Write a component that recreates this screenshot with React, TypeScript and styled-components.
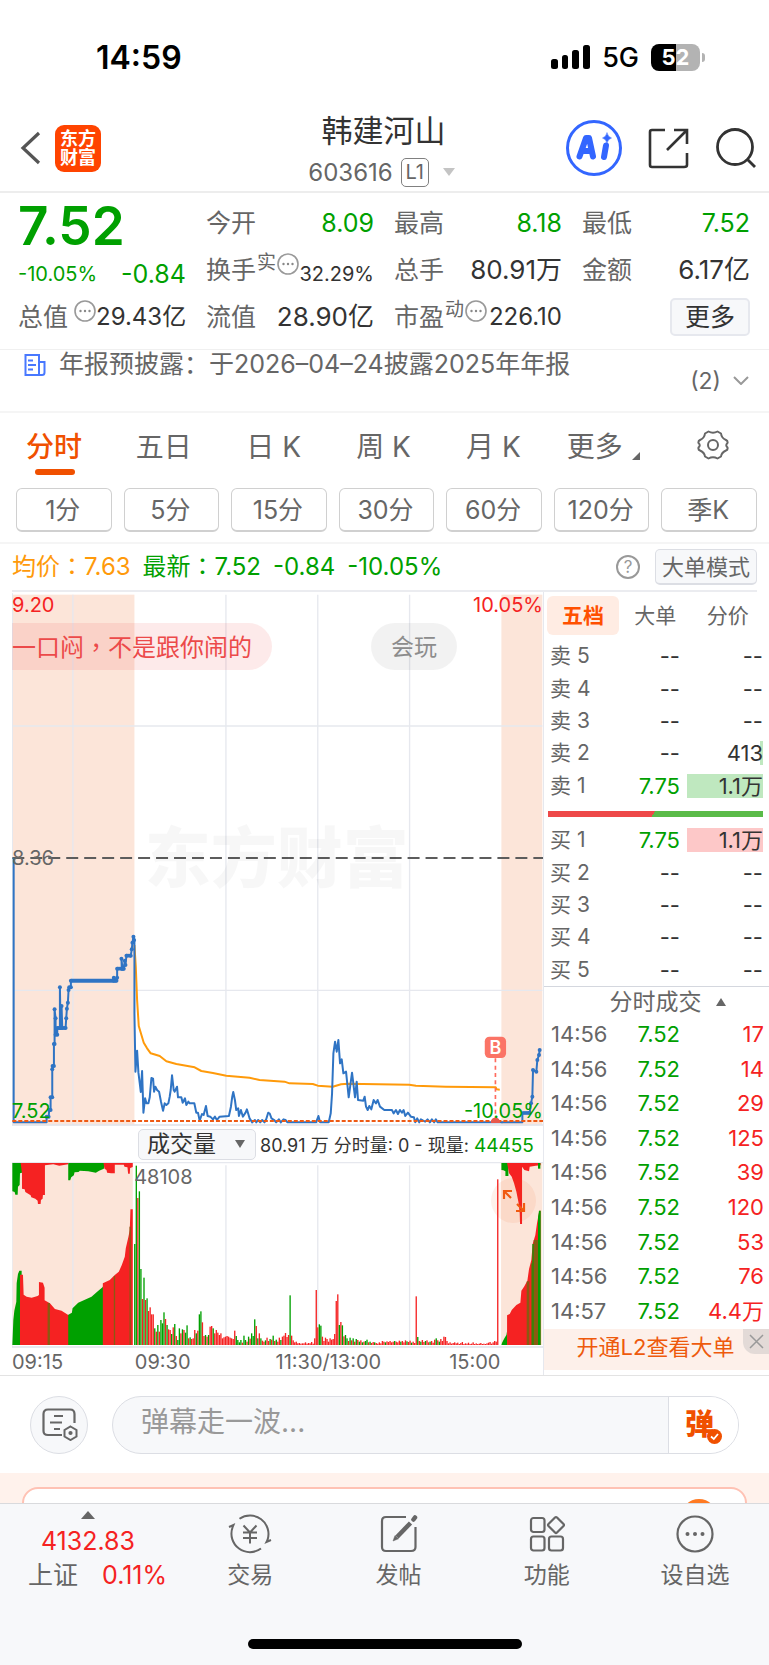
import React from "react";
import styled, { createGlobalStyle } from "styled-components";

const c = {
  green: "#00a000",
  red: "#f52222",
  orange: "#f05000",
  text: "#333333",
  sub: "#666666",
  line: "#e6e8ee",
  soft: "#f7f8fa",
  peach: "#fce5d9",
  blue: "#2f74c4",
  avg: "#ff9a0a",
  brown: "#8a5a12",
};

const Global = createGlobalStyle`
  *, *::before, *::after { box-sizing: border-box; }
  html, body { margin: 0; background: #fff; }
  body {
    font-family: Inter, "Noto Sans CJK SC", sans-serif;
    color: ${c.text};
    -webkit-font-smoothing: antialiased;
  }
  button, input, select { font: inherit; color: inherit; margin: 0; padding: 0; border: 0; background: none; }
  button { cursor: pointer; }
  table { border-collapse: collapse; }
  svg { display: block; }
`;

const Page = styled.div`
  min-height: 100vh;
  display: flex;
  flex-direction: column;
  overflow: hidden;
`;

/* ---------- status bar ---------- */

const StatusBar = styled.div`
  height: 104px;
  padding: 10px 69px 0 96px;
  display: flex;
  align-items: center;
  justify-content: space-between;
  color: #000;
`;
const Clock = styled.span`
  font-size: 32px;
  font-weight: 600;
`;
const StatusRight = styled.div`
  display: flex;
  align-items: center;
  gap: 12px;
`;
const Network = styled.span`
  font-size: 27px;
  font-weight: 500;
`;
const Battery = styled.span`
  position: relative;
  width: 49px;
  height: 27px;
  border-radius: 8px;
  background: linear-gradient(90deg, #000 52%, #b3b3b3 52%);
  color: #fff;
  font-size: 22px;
  font-weight: 700;
  line-height: 27px;
  text-align: center;
  &::after {
    content: "";
    position: absolute;
    right: -5px;
    top: 9px;
    width: 3px;
    height: 9px;
    border-radius: 0 3px 3px 0;
    background: #b3b3b3;
  }
`;

/* ---------- header ---------- */

const Header = styled.header`
  height: 89px;
  padding: 0 12px;
  border-bottom: 2px solid #ededed;
  display: grid;
  grid-template-columns: 1fr auto 1fr;
  align-items: center;
`;
const HeaderSide = styled.div<{ $end?: boolean; $gap: number }>`
  display: flex;
  align-items: center;
  gap: ${(p) => p.$gap}px;
  padding-left: ${(p) => (p.$end ? 0 : 6)}px;
  justify-content: ${(p) => (p.$end ? "flex-end" : "flex-start")};
`;
const IconButton = styled.button`
  display: flex;
  align-items: center;
  justify-content: center;
  color: ${c.text};
`;
const Logo = styled.a`
  width: 46px;
  height: 47px;
  padding-top: 4px;
  border-radius: 9px;
  background: #ff4400;
  color: #fff;
  font-size: 18px;
  font-weight: 700;
  line-height: 19px;
  text-align: center;
  text-decoration: none;
`;
const TitleBlock = styled.div`
  display: flex;
  flex-direction: column;
  align-items: center;
  padding: 6px 2px 0 0;
`;
const Title = styled.h1`
  margin: 0;
  font-size: 31px;
  font-weight: 400;
  line-height: 42px;
`;
const CodeRow = styled.div`
  display: flex;
  align-items: center;
  gap: 8px;
  height: 40px;
  padding-right: 4px;
  color: ${c.sub};
  font-size: 24px;
`;
const Level = styled.span`
  width: 28px;
  height: 29px;
  border: 1px solid #808080;
  border-radius: 5px;
  font-size: 20px;
  line-height: 27px;
  text-align: center;
`;
const Caret = styled.span<{ $up?: boolean; $color?: string; $size?: number }>`
  width: 0;
  height: 0;
  border: ${(p) => p.$size ?? 6}px solid transparent;
  ${(p) =>
    p.$up
      ? `border-top: 0; border-bottom: 8px solid ${p.$color ?? c.sub};`
      : `border-bottom: 0; border-top: 8px solid ${p.$color ?? c.sub};`}
`;
const CodeCaret = styled(Caret)`
  margin-left: 6px;
`;

/* ---------- quote ---------- */

const Quote = styled.section`
  height: 156px;
  padding: 6px 19px 0 18px;
  display: grid;
  grid-template-columns: repeat(4, minmax(0, 1fr));
  grid-auto-rows: 47px;
  column-gap: 20px;
`;
const Cell = styled.div`
  display: flex;
  align-items: center;
  justify-content: space-between;
  white-space: nowrap;
`;
const BigPrice = styled.strong`
  padding-top: 6px;
  font-size: 53px;
  font-weight: 600;
  line-height: 54px;
  color: ${c.green};
`;
const Label = styled.span`
  display: flex;
  gap: 1px;
  color: ${c.sub};
  font-size: 25px;
  line-height: 34px;
`;
const Sup = styled.small`
  font-size: 19px;
  line-height: 20px;
`;
const InfoMark = styled.span<{ $apart?: boolean }>`
  padding-left: ${(p) => (p.$apart ? 5 : 0)}px;
`;
const Value = styled.span<{ $tone?: string; $size?: number; $low?: boolean }>`
  font-size: ${(p) => p.$size ?? 25}px;
  line-height: 34px;
  color: ${(p) => p.$tone ?? c.text};
  padding-top: ${(p) => (p.$low ? 8 : 0)}px;
`;
const MoreButton = styled.button`
  width: 80px;
  height: 38px;
  margin-left: auto;
  border: 2px solid ${c.line};
  border-radius: 5px;
  background: ${c.soft};
  font-size: 25px;
  line-height: 32px;
`;

/* ---------- news ---------- */

const News = styled.section`
  height: 64px;
  padding: 0 20px 0 24px;
  border-top: 1px solid #f0f0f0;
  border-bottom: 2px solid #f5f5f5;
  display: flex;
  gap: 13px;
  color: ${c.sub};
  svg { flex: none; }
`;
const NewsIcon = styled.span`
  padding-top: 4px;
`;
const NewsLink = styled.a`
  flex: 1;
  color: inherit;
  text-decoration: none;
  font-size: 25px;
  line-height: 29px;
`;
const NewsCount = styled.button`
  display: flex;
  align-items: center;
  gap: 12px;
  font-size: 23px;
`;

/* ---------- periods ---------- */

const Tabs = styled.nav`
  height: 66px;
  display: grid;
  grid-template-columns: repeat(7, 1fr);
`;
const Tab = styled.button<{ $active?: boolean }>`
  position: relative;
  display: flex;
  align-items: center;
  justify-content: center;
  padding: 0 2px 3px 0;
  font-size: 28px;
  white-space: nowrap;
  color: ${(p) => (p.$active ? c.orange : c.sub)};
  font-weight: ${(p) => (p.$active ? 500 : 400)};
  &::after {
    content: "";
    display: ${(p) => (p.$active ? "block" : "none")};
    position: absolute;
    left: 50%;
    bottom: 4px;
    width: 40px;
    height: 6px;
    margin-left: -20px;
    border-radius: 3px;
    background: ${c.orange};
  }
`;
const Corner = styled.span`
  align-self: flex-end;
  margin: 0 0 16px 9px;
  border-left: 8px solid transparent;
  border-bottom: 8px solid ${c.sub};
`;
const Minutes = styled.div`
  padding: 9px 12px 10px 16px;
  border-bottom: 2px solid #f5f5f5;
  display: grid;
  grid-template-columns: repeat(7, 1fr);
  gap: 12px;
`;
const MinuteButton = styled.button`
  height: 44px;
  padding-right: 2px;
  border: 1px solid #d0d0d0;
  border-bottom-width: 2px;
  border-radius: 6px;
  color: ${c.sub};
  font-size: 25px;
  line-height: 42px;
  white-space: nowrap;
`;

/* ---------- chart heading ---------- */

const Summary = styled.div`
  height: 48px;
  margin: 0 12px;
  border-bottom: 2px solid #ebecf0;
  display: flex;
  align-items: center;
  gap: 12px;
  font-family: Inter, "Noto Sans CJK TC", sans-serif;
  font-size: 24px;
  line-height: 36px;
  color: ${c.green};
  white-space: nowrap;
`;
const Average = styled.span`
  color: ${c.avg};
`;
const Help = styled.button`
  width: 24px;
  height: 24px;
  margin-left: auto;
  border: 2px solid #999;
  border-radius: 50%;
  color: #999;
  font-size: 17px;
  line-height: 20px;
`;
const ModeButton = styled.button`
  width: 102px;
  height: 36px;
  margin-left: 3px;
  border: 1px solid #dcdee4;
  border-bottom-width: 2px;
  border-radius: 5px;
  background: ${c.soft};
  color: ${c.sub};
  font-size: 22px;
  line-height: 32px;
`;

/* ---------- chart column ---------- */

const Board = styled.main`
  display: flex;
  border-bottom: 1px solid #e3e3e3;
`;
const ChartColumn = styled.div`
  flex: 1;
  min-width: 0;
  padding-left: 12px;
  border-right: 1px solid ${c.line};
`;
const PriceArea = styled.div`
  position: relative;
  height: 534px;
  overflow: hidden;
  & > svg { width: 100%; height: 100%; }
`;
const VolumeArea = styled(PriceArea)`
  height: 186px;
`;
const ChartText = styled.span<{ $top: number; $right?: boolean; $tone: string }>`
  position: absolute;
  top: ${(p) => p.$top}px;
  ${(p) => (p.$right ? "right: 0;" : "left: 0;")}
  font-size: 20px;
  line-height: 24px;
  color: ${(p) => p.$tone};
`;
const PeakVolume = styled(ChartText)`
  left: 23%;
`;
const Watermark = styled.span`
  position: absolute;
  top: 222px;
  left: 25%;
  font-size: 66px;
  font-weight: 900;
  line-height: 88px;
  color: rgba(0, 0, 0, 0.03);
`;
const Bullet = styled.span<{ $mine?: boolean }>`
  position: absolute;
  top: 31px;
  left: ${(p) => (p.$mine ? "0" : "67.6%")};
  height: 47px;
  padding: ${(p) => (p.$mine ? "0 20px 0 0" : "0 20px")};
  border-radius: ${(p) => (p.$mine ? "0 24px 24px 0" : "24px")};
  background: ${(p) => (p.$mine ? "rgba(236, 60, 60, 0.11)" : "rgba(0, 0, 0, 0.05)")};
  color: ${(p) => (p.$mine ? "#ec4a4a" : "#8c8c8c")};
  font-family: "Noto Sans CJK TC", sans-serif;
  font-size: ${(p) => (p.$mine ? 24 : 23)}px;
  line-height: 45px;
  white-space: nowrap;
`;
const VolumeBar = styled.div`
  height: 36px;
  padding-left: 126px;
  display: flex;
  align-items: center;
  gap: 4px;
  font-size: 18px;
  white-space: pre;
  b { font-weight: 400; font-size: 19px; color: ${c.green}; }
`;
const SelectBox = styled.label`
  position: relative;
  display: flex;
  align-items: center;
  width: 118px;
  height: 31px;
  border: 1px solid #dcdee4;
  border-radius: 5px;
  background: ${c.soft};
  select {
    width: 100%;
    padding-left: 8px;
    appearance: none;
    outline: none;
    font-size: 23px;
    line-height: 28px;
  }
  span { position: absolute; right: 10px; pointer-events: none; }
`;
const Expand = styled.button`
  position: absolute;
  top: 16px;
  right: 7px;
  width: 45px;
  height: 45px;
  border-radius: 50%;
  background: rgba(240, 80, 0, 0.08);
  display: flex;
  align-items: center;
  justify-content: center;
`;
const Axis = styled.div`
  height: 27px;
  display: grid;
  grid-template-columns: 123fr 141fr 174fr 94fr;
  color: ${c.sub};
  font-size: 20px;
  line-height: 29px;
  white-space: nowrap;
`;

/* ---------- depth column ---------- */

const DepthColumn = styled.aside`
  width: 225px;
  display: flex;
  flex-direction: column;
  font-size: 22px;
`;
const DepthTabs = styled.div`
  height: 48px;
  padding: 4px 5px 5px 3px;
  display: grid;
  grid-template-columns: 72px 1fr 1fr;
`;
const DepthTab = styled.button<{ $active?: boolean }>`
  border-radius: 6px;
  font-size: 21px;
  line-height: 38px;
  background: ${(p) => (p.$active ? "#ffece3" : "none")};
  color: ${(p) => (p.$active ? "#ff5000" : c.sub)};
  font-weight: ${(p) => (p.$active ? 700 : 400)};
`;
const DepthTable = styled.table`
  width: 100%;
  height: 162px;
  table-layout: fixed;
  th, td { padding: 0; text-align: right; font-weight: 400; line-height: 24px; }
  th { width: 54px; padding-left: 6px; text-align: left; color: ${c.sub}; font-size: 21px; }
  td:last-child { width: 89px; padding: 0 6px 0 7px; }
`;
const Amount = styled.span<{ $fill?: string }>`
  display: block;
  background: ${(p) => p.$fill ?? "none"};
`;
const Ratio = styled.div`
  height: 6px;
  margin: 9px 6px 7px 4px;
  background: linear-gradient(120deg, #ee4848 49%, #5abb48 49%);
`;
const TradesHead = styled.button`
  height: 31px;
  padding-left: 22px;
  border-top: 1px solid #d4d7de;
  display: flex;
  align-items: center;
  justify-content: center;
  gap: 14px;
  color: ${c.sub};
  font-size: 23px;
  line-height: 29px;
`;
const Trades = styled.table`
  width: 100%;
  height: 311px;
  margin-bottom: 1px;
  table-layout: fixed;
  td { height: 34px; padding: 0; text-align: right; line-height: 24px; }
  td:first-child { width: 72px; padding-left: 7px; text-align: left; color: ${c.sub}; }
  td:nth-child(2) { width: 64px; color: ${c.green}; }
  td:last-child { padding-right: 5px; color: ${c.red}; }
`;
const Promo = styled.div`
  position: relative;
  height: 41px;
  background: #fdf0ea;
  a {
    display: block;
    padding-right: 2px;
    color: #ee5a0c;
    font-size: 22px;
    line-height: 37px;
    text-align: center;
    text-decoration: none;
  }
`;
const PromoClose = styled.button`
  position: absolute;
  top: 0;
  right: 0;
  width: 26px;
  height: 25px;
  border-radius: 0 0 0 12px;
  background: #e3dad7;
  display: flex;
  align-items: center;
  justify-content: center;
`;

/* ---------- comment box ---------- */

const Compose = styled.form`
  height: 97px;
  padding: 0 30px;
  display: flex;
  align-items: center;
  gap: 24px;
`;
const RoundButton = styled.button`
  width: 58px;
  height: 58px;
  border: 1px solid #dcdee4;
  border-radius: 50%;
  background: ${c.soft};
  display: flex;
  align-items: center;
  justify-content: center;
  padding-left: 2px;
`;
const ComposePill = styled.div`
  flex: 1;
  height: 58px;
  border: 1px solid #dcdee4;
  border-radius: 29px;
  overflow: hidden;
  display: flex;
  background: ${c.soft};
  input {
    flex: 1;
    min-width: 0;
    padding: 0 0 6px 28px;
    outline: none;
    font-size: 28px;
  }
  input::placeholder { color: #999; opacity: 1; }
`;
const SendButton = styled.button`
  position: relative;
  width: 70px;
  border-left: 1px solid #dcdee4;
  background: #fff;
  padding-right: 8px;
  color: ${c.orange};
  font-size: 29px;
  font-weight: 900;
  line-height: 54px;
  svg { position: absolute; left: 38px; top: 32px; }
`;
const CardPeek = styled.div`
  height: 30px;
  padding: 14px 22px 0;
  background: #fff2ec;
  overflow: hidden;
`;
const Card = styled.div`
  height: 60px;
  padding: 10px 28px;
  border: 2px solid #ffc2b4;
  border-radius: 16px;
  background: #fff;
  display: flex;
  justify-content: flex-end;
  &::after {
    content: "";
    width: 36px;
    height: 36px;
    border-radius: 50%;
    background: #ff7a22;
  }
`;

/* ---------- bottom bar ---------- */

const Footer = styled.footer`
  flex: 1;
  min-height: 162px;
  border-top: 1px solid #d9dadd;
  background: ${c.soft};
  display: flex;
  flex-direction: column;
  justify-content: space-between;
  align-items: center;
`;
const FooterNav = styled.nav`
  width: 100%;
  display: grid;
  grid-template-columns: 176fr 148fr 148fr 148fr 148fr;
  color: ${c.sub};
`;
const FooterItem = styled.a`
  padding-top: 10px;
  display: flex;
  flex-direction: column;
  align-items: center;
  gap: 5px;
  color: inherit;
  text-decoration: none;
  font-size: 23px;
  line-height: 32px;
`;
const IndexItem = styled.a`
  padding: 7px 0 0 28px;
  color: ${c.red};
  text-decoration: none;
  font-size: 25px;
`;
const IndexTop = styled.div`
  width: 120px;
  display: flex;
  flex-direction: column;
  align-items: center;
  line-height: 44px;
`;
const IndexRow = styled.div`
  display: flex;
  align-items: center;
  gap: 24px;
  line-height: 24px;
  white-space: nowrap;
  span { color: ${c.sub}; }
`;
const HomeBar = styled.div`
  width: 274px;
  height: 10px;
  margin-bottom: 16px;
  border-radius: 5px;
  background: #000;
`;

/* ---------- icons ---------- */

const Dots = ({ apart }: { apart?: boolean }) => (
  <InfoMark $apart={apart}>
    <svg width="22" height="22" viewBox="0 0 22 22">
      <circle cx="11" cy="11" r="10" fill="none" stroke="#999" strokeWidth="1.6" />
      <circle cx="6.5" cy="11" r="1.2" fill="#888" />
      <circle cx="11" cy="11" r="1.2" fill="#888" />
      <circle cx="15.5" cy="11" r="1.2" fill="#888" />
    </svg>
  </InfoMark>
);

const stroke = { fill: "none", stroke: "#666", strokeWidth: 2.2 } as const;

/* ---------- chart data (three units to a pixel) ---------- */

const auctionOpen =
  "41,-96 41,697 140,697 140,680 146,680 148,660 152,660 152,622 157,622 157,538 158,528 162,528 162,462 164,462 164,358 167,385 167,434 172,434 172,414 180,414 180,292 182,414 185,348 187,414 197,414 199,385 201,356 204,338 206,300 208,292 213,292 213,272 342,272 342,263 350,272 352,263 352,236 366,236 365,206 368,236 372,236 375,212 377,225 380,197 393,197 396,178 398,158 401,140 403,150";
const morning =
  "404,150 404,370 407,545 412,482 416,548 420,580 423,606 427,543 431,668 436,625 440,640 446,640 450,622 455,564 460,566 463,605 467,590 472,600 478,605 484,636 490,662 495,640 500,645 506,640 510,620 513,600 517,556 522,600 525,605 532,590 535,622 545,622 549,638 556,625 560,645 566,635 570,640 584,640 590,668 595,668 600,692 607,672 612,675 619,648 624,678 632,680 640,688 646,680 652,690 660,680 688,678 694,650 698,620 701,606 706,630 710,660 716,655 718,678 724,660 730,680 738,668 742,658 750,685 758,697 766,690 770,697 776,690 782,697 788,690 795,697 800,688 806,668 810,669";
const afternoon =
  "0,669 6,685 14,690 20,697 28,688 34,697 42,688 48,690 54,697 140,697 147,678 152,697 178,697 184,670 188,610 192,490 197,455 202,485 207,450 212,520 217,508 222,550 230,545 238,622 248,548 257,622 262,575 266,630 282,632 286,620 290,650 295,660 300,648 306,658 313,630 320,640 325,630 332,650 345,660 368,660 373,670 380,660 386,672 392,660 398,668 403,660 408,678 416,668 425,680 434,682 438,697 444,685 450,697 455,688 462,692 468,695 475,688 482,697 488,688 495,697 500,688 505,697 700,697";
const auctionClose =
  "697,697 760,697 760,668 782,668 786,640 790,620 792,540 802,545 805,510 810,495 812,480";
const averageLine =
  "404,165 408,230 412,330 417,408 425,435 432,458 442,475 453,490 480,498 500,514 530,522 585,532 605,543 640,549 680,557 750,563 780,570 855,575 870,580 940,582 955,587 1000,590 1025,583 1045,581 1230,584 1250,587 1340,590 1490,592 1493,598 1502,599";

const dotsOf = (points: string) =>
  points
    .split(" ")
    .slice(3)
    .map((p) => p.split(",").map(Number));

/* volume per minute, positive red and negative green */
const volumes = [
  -303, -538, 441, -461, -228, 138, -202, 135, -140, 102, 113, 92, 92, -50, 40, -60, 40, -75, -65, -98, 78, -60, 47,
  45, -33, 53, -63, 27, -15, -50, 35, -47, 45, -37, -59, 20, -23, 18, 20, 45, -35, 43, -92, -101, 68, 27, -30, 25, -30,
  55, 57, -50, 35, 45, 37, 30, 35, 20, 23, 25, 27, 25, 22, 20, 18, 43, -27, -15, -8, -15, 7, -28, -15, 10, -25, 19,
  -35, -27, -77, 57, -20, 35, -20, 13, 10, -14, 22, 12, -18, 16, -28, 12, -16, 10, 22, -15, 25, 28, 36, 24, 30, -149, 28,
  14, 8, 10, 5, 6, 4, 5, 5, 8, 4, 6, 5, 9, 4, 20, 165, 53, -62, -58, 25, 12, 22, 18, 10, 20, 16, 18, 33, 132, 152, -60,
  69, -59, 26, -30, -20, 12, -22, 14, -20, 10, -18, 15, -10, 14, -8, 10, -12, -16, 8, -10, 6, 9, -8, 6, 4, 8, 5, 12, 10,
  -8, 11, 9, 12, 8, 10, -12, 10, 8, 13, -10, 12, 8, 14, -11, 9, 13, -7, 10, 6, 146, -24, 12, -10, 15, 9, -12, 14, 8, -10,
  12, 7, 16, -20, 14, -10, 18, 12, 25, 24, 12, 5, 8, 4, 6, 8, 5, 7, 3, 6, 9, 3, 5, 4, 7, 3, 4, 8, 3, 5, 3, 4, 6, 3, 4, 3,
  5, 7, 9, 4, 8, 12, 10, 497,
];
const step = 1091 / (volumes.length - 1);

const gridX = [219, 679, 955, 1231];

const PriceChart = () => (
  <svg viewBox="36 -894 1596 1602" preserveAspectRatio="none" role="img" aria-label="分时走势">
    <rect x="37" y="-886" width="367" height="1590" fill={c.peach} />
    <rect x="1507" y="-886" width="123" height="1590" fill={c.peach} />
    {gridX.map((x) => (
      <line key={x} x1={x} x2={x} y1="-886" y2="704" stroke={c.line} strokeWidth="4" />
    ))}
    <line x1="37" x2="1630" y1="-492" y2="-492" stroke={c.line} strokeWidth="5" />
    <line x1="37" x2="1630" y1="301" y2="301" stroke={c.line} strokeWidth="4" />
    <line x1="37" x2="37" y1="-890" y2="704" stroke={c.line} strokeWidth="4" />
    <line x1="36" x2="1632" y1="705" y2="705" stroke="#dfe2e8" strokeWidth="5" />
    <line x1="37" x2="1632" y1="-96" y2="-96" stroke="#5c5c5c" strokeWidth="6" strokeDasharray="36 18" />
    <polyline points={averageLine} fill="none" stroke={c.avg} strokeWidth="6" strokeLinejoin="round" />
    <g fill="none" stroke={c.blue} strokeWidth="6" strokeLinejoin="round">
      <polyline points={auctionOpen} />
      <polyline points={morning} />
      <line x1="213" x2="350" y1="272" y2="272" strokeWidth="12" />
      <line x1="172" x2="198" y1="414" y2="414" strokeWidth="11" />
      <line x1="352" x2="374" y1="236" y2="236" strokeWidth="11" />
      <line x1="379" x2="394" y1="197" y2="197" strokeWidth="11" />
      <g transform="translate(810 0)">
        <polyline points={afternoon} />
        <polyline points={auctionClose} />
        <line x1="760" x2="782" y1="669" y2="669" strokeWidth="11" />
      </g>
    </g>
    <g fill={c.blue}>
      {dotsOf(auctionOpen).map(([x, y], i) => (
        <circle key={i} cx={x} cy={y} r="6" />
      ))}
      {dotsOf(auctionClose).map(([x, y], i) => (
        <circle key={i} cx={x + 810} cy={y} r="6" />
      ))}
    </g>
    <line x1="37" x2="1632" y1="693" y2="693" stroke="#ee5a14" strokeWidth="6" strokeDasharray="12 6" />
    <line x1="1489" x2="1489" y1="505" y2="690" stroke="#ff6b5e" strokeWidth="5" strokeDasharray="12 10" />
    <path d="M1475 699 q0 -16 14 -16 q14 0 14 16z" fill="#e8584c" />
    <rect x="1457" y="440" width="64" height="64" rx="14" fill="#fb7466" />
    <text x="1489" y="491" textAnchor="middle" fontSize="54" fontWeight="600" fill="#fff">
      B
    </text>
  </svg>
);

const VolumeChart = () => (
  <svg viewBox="36 126 1596 558" preserveAspectRatio="none" role="img" aria-label="成交量">
    <line x1="36" x2="1632" y1="128" y2="128" stroke={c.line} strokeWidth="4" />
    <rect x="37" y="129" width="362" height="546" fill={c.peach} />
    <rect x="1506" y="129" width="124" height="546" fill={c.peach} />
    {gridX.map((x) => (
      <line key={x} x1={x} x2={x} y1="136" y2="675" stroke={c.line} strokeWidth="4" />
    ))}
    <line x1="36" x2="36" y1="129" y2="682" stroke={c.line} strokeWidth="4" />
    <g fill={c.green}>
      <path d="M37 129 V214 L44 216 L46 224 H53 L54 200 L59 195 L60 160 L66 158 V129z" />
      <path d="M205 129 V181 H211 L214 172 L222 166 L224 157 L236 156 L240 152 L265 154 L288 158 L298 152 L312 146 L316 129z" />
      <path d="M37 675 L40 600 L43 572 L49 545 L50 490 L54 462 L58 452 H65 V675z" />
      <path d="M204 675 V585 L216 578 L218 565 L235 548 L260 537 L275 530 L292 515 L308 502 L312 495 V675z" />
    </g>
    <g fill={c.red}>
      <path d="M62 129 L66 160 V206 L74 208 L76 216 L92 226 L94 232 L106 236 L113 242 L114 252 H122 L123 240 L128 236 L129 225 H135 V136 L160 133 L178 137 L205 133 V129z" />
      <path d="M311 129 L314 146 L320 150 L322 158 L334 160 H345 V134 L372 134 L374 140 L383 142 L385 161 H390 L391 144 L399 141 V129z" />
      <path d="M60 675 V464 H69 L71 524 L80 530 L95 533 L113 528 L117 525 V486 L129 488 L134 503 V541 L150 550 L165 567 L185 572 L205 585 V675z" />
      <path d="M309 675 V490 L330 480 L345 465 L357 455 L366 435 L375 410 L378 385 L386 350 L390 330 L392 268 H399 V675z" />
    </g>
    <g fill={c.brown}>
      <rect x="143" y="549" width="7" height="126" />
      <rect x="342" y="468" width="4" height="207" />
      <rect x="389" y="320" width="4" height="355" />
    </g>
    {volumes.map((v, i) => (
      <rect
        key={i}
        x={403 + i * step}
        y={675 - Math.abs(v)}
        width="4"
        height={Math.abs(v)}
        fill={v > 0 ? c.red : c.green}
      />
    ))}
    <g transform="translate(810 0)">
      <path d="M697 129 V150 L703 151 L709 154 V168 H718 V129z" fill={c.green} />
      <path d="M714 129 L720 160 L728 170 L735 190 L742 215 L748 245 L752 280 L753 312 H759 V140 L766 150 L780 154 L782 140 L800 137 L815 136 V129z" fill={c.red} />
      <rect x="807" y="129" width="7" height="17" fill={c.green} />
      <path d="M697 675 L699 668 L706 655 L712 645 L715 628 V675z" fill={c.green} />
      <path d="M714 675 V586 L722 582 L728 570 L742 555 L754 548 L757 512 L765 500 L775 482 L780 447 L787 420 L791 372 L799 345 L804 310 L811 272 H815 V675z" fill={c.red} />
      <g fill={c.brown}>
        <rect x="773" y="484" width="8" height="191" />
        <rect x="786" y="430" width="5" height="245" />
        <rect x="794" y="360" width="13" height="315" />
      </g>
      <rect x="790" y="372" width="4" height="303" fill={c.green} />
      <path d="M807 675 V292 L810 272 H815 V675z" fill={c.green} />
    </g>
    <line x1="36" x2="1632" y1="681" y2="681" stroke="#dfe2e8" strokeWidth="5" />
  </svg>
);

/* ---------- page data ---------- */

type Level5 = { name: string; price?: string; amount?: string; fill?: string };
const sells: Level5[] = [
  { name: "卖 5" },
  { name: "卖 4" },
  { name: "卖 3" },
  { name: "卖 2", amount: "413", fill: "linear-gradient(270deg, #bfe8bf 3px, transparent 3px)" },
  { name: "卖 1", price: "7.75", amount: "1.1万", fill: "#bfe8bf" },
];
const buys: Level5[] = [
  { name: "买 1", price: "7.75", amount: "1.1万", fill: "#fdc8c8" },
  { name: "买 2" },
  { name: "买 3" },
  { name: "买 4" },
  { name: "买 5" },
];
const trades = [
  ["14:56", "17"],
  ["14:56", "14"],
  ["14:56", "29"],
  ["14:56", "125"],
  ["14:56", "39"],
  ["14:56", "120"],
  ["14:56", "53"],
  ["14:56", "76"],
  ["14:57", "4.4万"],
];

const Price = styled.td<{ $set: boolean }>`
  color: ${(p) => (p.$set ? c.green : c.text)};
`;

const Depth = ({ rows, label }: { rows: Level5[]; label: string }) => (
  <DepthTable aria-label={label}>
    <tbody>
      {rows.map((r) => (
        <tr key={r.name}>
          <th scope="row">{r.name}</th>
          <Price $set={Boolean(r.price)}>{r.price ?? "--"}</Price>
          <td>
            <Amount $fill={r.fill}>{r.amount ?? "--"}</Amount>
          </td>
        </tr>
      ))}
    </tbody>
  </DepthTable>
);

export default function App() {
  return (
    <Page>
      <Global />
      <StatusBar>
        <Clock>14:59</Clock>
        <StatusRight>
          <svg width="39" height="24" viewBox="0 0 39 24">
            <rect x="0" y="14" width="7" height="10" rx="2.5" />
            <rect x="11" y="10" width="6" height="14" rx="2.5" />
            <rect x="21" y="5" width="7" height="19" rx="2.5" />
            <rect x="32" y="0" width="7" height="24" rx="2.5" />
          </svg>
          <Network>5G</Network>
          <Battery>52</Battery>
        </StatusRight>
      </StatusBar>

      <Header>
        <HeaderSide $gap={13}>
          <IconButton aria-label="返回">
            <svg width="24" height="36" viewBox="0 0 24 36">
              <path d="M21 3 L5 18 L21 33" fill="none" stroke="#555" strokeWidth="3.2" />
            </svg>
          </IconButton>
          <Logo href="#">
            东方
            <br />
            财富
          </Logo>
        </HeaderSide>
        <TitleBlock>
          <Title>韩建河山</Title>
          <CodeRow>
            603616 <Level>L1</Level>
            <CodeCaret $color="#c4c4c4" />
          </CodeRow>
        </TitleBlock>
        <HeaderSide $end $gap={26}>
          <IconButton aria-label="Ai">
            <svg width="56" height="56" viewBox="0 0 56 56">
              <circle cx="28" cy="28" r="26.5" fill="#fff" stroke="#3366ff" strokeWidth="3" />
              <g fill="#3366ff" stroke="#3366ff" strokeLinejoin="round" strokeLinecap="round">
                <path d="M13.500 36.500 L20 18 L23 18 L27 36.500 M17 31 H25" fill="none" strokeWidth="6" />
                <path d="M40 25.500 L38 37" fill="none" strokeWidth="6" />
                <path d="M41 13 q1 4 4.500 5 q-3.500 1 -4.500 5 q-1 -4 -4.500 -5 q3.500 -1 4.500 -5z" strokeWidth="0.500" />
              </g>
            </svg>
          </IconButton>
          <IconButton aria-label="分享">
            <svg width="41" height="41" viewBox="0 0 41 41" fill="none" stroke="#333" strokeWidth="2.600">
              <path d="M17 2 H4 Q2 2 2 4 V37 Q2 39 4 39 H36 Q39 39 39 37 V25" />
              <path d="M26 2 H39 V16 M39 2 L19 22" />
            </svg>
          </IconButton>
          <IconButton aria-label="搜索">
            <svg width="42" height="42" viewBox="0 0 42 42" fill="none" stroke="#333" strokeWidth="2.800">
              <circle cx="20" cy="20" r="17.500" />
              <path d="M32 32 L40 40" />
            </svg>
          </IconButton>
        </HeaderSide>
      </Header>

      <Quote>
        <Cell>
          <BigPrice>7.52</BigPrice>
        </Cell>
        <Cell>
          <Label>今开</Label>
          <Value $tone={c.green}>8.09</Value>
        </Cell>
        <Cell>
          <Label>最高</Label>
          <Value $tone={c.green}>8.18</Value>
        </Cell>
        <Cell>
          <Label>最低</Label>
          <Value $tone={c.green}>7.52</Value>
        </Cell>
        <Cell>
          <Value $tone={c.green} $size={20} $low>
            -10.05%
          </Value>
          <Value $tone={c.green} $low>
            -0.84
          </Value>
        </Cell>
        <Cell>
          <Label>
            换手<Sup>实</Sup>
            <Dots />
          </Label>
          <Value $size={20} $low>
            32.29%
          </Value>
        </Cell>
        <Cell>
          <Label>总手</Label>
          <Value $size={26}>80.91万</Value>
        </Cell>
        <Cell>
          <Label>金额</Label>
          <Value $size={26}>6.17亿</Value>
        </Cell>
        <Cell>
          <Label>
            总值
            <Dots apart />
          </Label>
          <Value $size={24}>29.43亿</Value>
        </Cell>
        <Cell>
          <Label>流值</Label>
          <Value $size={26}>28.90亿</Value>
        </Cell>
        <Cell>
          <Label>
            市盈<Sup>动</Sup>
            <Dots />
          </Label>
          <Value $size={24}>226.10</Value>
        </Cell>
        <Cell>
          <MoreButton>更多</MoreButton>
        </Cell>
      </Quote>

      <News>
        <NewsIcon>
          <svg width="22" height="22" viewBox="0 0 22 22" fill="none" stroke="#4878ff" strokeWidth="2">
            <path d="M15 21 H1.500 V1 H15 V21 M15 8 H20.500 V18.500 Q20.500 21 18 21 H15" />
            <path d="M4 6.500 H9 M4 11 H12 M4 15.500 H9" />
          </svg>
        </NewsIcon>
        <NewsLink href="#">年报预披露：于2026–04–24披露2025年年报</NewsLink>
        <NewsCount>
          (2)
          <svg width="16" height="9" viewBox="0 0 16 9">
            <path d="M1 1 L8 8 L15 1" fill="none" stroke="#999" strokeWidth="2" />
          </svg>
        </NewsCount>
      </News>

      <Tabs>
        <Tab $active>分时</Tab>
        <Tab>五日</Tab>
        <Tab>日 K</Tab>
        <Tab>周 K</Tab>
        <Tab>月 K</Tab>
        <Tab>
          更多
          <Corner />
        </Tab>
        <Tab aria-label="设置">
          <svg width="32" height="32" viewBox="0 0 32 32" {...stroke} strokeWidth="2" strokeLinejoin="round">
            <path d="M11.500 2.500 Q16 5 20.500 2.500 L24 4.500 Q24.500 9 29 11 Q31 12 30.500 14 Q28 16 30.500 18.500 Q31 21 29 21.500 Q24.500 23.500 24 27.500 L20.500 29.500 Q16 27 11.500 29.500 L8 27.500 Q7.500 23.500 3 21.500 Q1 21 1.500 18.500 Q4 16 1.500 14 Q1 12 3 11 Q7.500 9 8 4.500z" />
            <circle cx="16" cy="16" r="5" />
          </svg>
        </Tab>
      </Tabs>
      <Minutes>
        {["1分", "5分", "15分", "30分", "60分", "120分", "季K"].map((m) => (
          <MinuteButton key={m}>{m}</MinuteButton>
        ))}
      </Minutes>

      <Summary>
        <Average>均价：7.63</Average>
        <span>最新：7.52</span>
        <span>-0.84</span>
        <span>-10.05%</span>
        <Help>?</Help>
        <ModeButton>大单模式</ModeButton>
      </Summary>

      <Board>
        <ChartColumn>
          <PriceArea>
            <PriceChart />
            <Watermark>东方财富</Watermark>
            <ChartText $top={1} $tone={c.red}>
              9.20
            </ChartText>
            <ChartText $top={1} $right $tone={c.red}>
              10.05%
            </ChartText>
            <ChartText $top={254} $tone={c.sub}>
              8.36
            </ChartText>
            <ChartText $top={507} $tone={c.green}>
              7.52
            </ChartText>
            <ChartText $top={507} $right $tone={c.green}>
              -10.05%
            </ChartText>
            <Bullet $mine>一口闷，不是跟你闹的</Bullet>
            <Bullet>会玩</Bullet>
          </PriceArea>
          <VolumeBar>
            <SelectBox>
              <select aria-label="指标" defaultValue="成交量">
                <option>成交量</option>
              </select>
              <Caret as="span" $size={5} />
            </SelectBox>
            <span>
              80.91 万 分时量: 0 - 现量: <b>44455</b>
            </span>
          </VolumeBar>
          <VolumeArea>
            <VolumeChart />
            <PeakVolume $top={3} $tone={c.sub}>
              48108
            </PeakVolume>
            <Expand aria-label="展开">
              <svg width="24" height="24" viewBox="0 0 24 24" fill="none" stroke="#f05a10" strokeWidth="2.200">
                <path d="M2 10 V2 H10 M2 2 L9 9 M22 14 V22 H14 M22 22 L15 15" />
              </svg>
            </Expand>
          </VolumeArea>
          <Axis>
            <span>09:15</span>
            <span>09:30</span>
            <span>11:30/13:00</span>
            <span>15:00</span>
          </Axis>
        </ChartColumn>

        <DepthColumn>
          <DepthTabs>
            <DepthTab $active>五档</DepthTab>
            <DepthTab>大单</DepthTab>
            <DepthTab>分价</DepthTab>
          </DepthTabs>
          <Depth rows={sells} label="卖盘" />
          <Ratio />
          <Depth rows={buys} label="买盘" />
          <TradesHead>
            分时成交
            <Caret $up $size={5} />
          </TradesHead>
          <Trades aria-label="分时成交">
            <tbody>
              {trades.map(([time, qty], i) => (
                <tr key={i}>
                  <td>{time}</td>
                  <td>7.52</td>
                  <td>{qty}</td>
                </tr>
              ))}
            </tbody>
          </Trades>
          <Promo>
            <a href="#">开通L2查看大单</a>
            <PromoClose aria-label="关闭">
              <svg width="15" height="15" viewBox="0 0 15 15">
                <path d="M1 1 L14 14 M14 1 L1 14" stroke="#999" strokeWidth="1.500" />
              </svg>
            </PromoClose>
          </Promo>
        </DepthColumn>
      </Board>

      <Compose onSubmit={(e) => e.preventDefault()}>
        <RoundButton type="button" aria-label="弹幕设置">
          <svg width="36" height="33" viewBox="0 0 36 33" {...stroke}>
            <path d="M20 27 H6 Q1.500 27 1.500 23 V6 Q1.500 1.500 6 1.500 H28 Q32.500 1.500 32.500 6 V15" />
            <path d="M12 8 H21 M8 14.500 H20 M12 21 H18" />
            <path d="M28.500 18.500 L34.500 22 V28.500 L28.500 32 L22.500 28.500 V22z" strokeWidth="2" />
            <circle cx="28.500" cy="25" r="1" />
          </svg>
        </RoundButton>
        <ComposePill>
          <input aria-label="弹幕" placeholder="弹幕走一波..." />
          <SendButton>
            弹
            <svg width="15" height="15" viewBox="0 0 15 15">
              <circle cx="7.500" cy="7.500" r="7.500" fill="#f05000" />
              <path d="M4 7.500 L6.800 10 L11 5" fill="none" stroke="#fff" strokeWidth="1.800" />
            </svg>
          </SendButton>
        </ComposePill>
      </Compose>
      <CardPeek>
        <Card />
      </CardPeek>

      <Footer>
        <FooterNav>
          <IndexItem href="#">
            <IndexTop>
              <Caret $up $size={7} />
              4132.83
            </IndexTop>
            <IndexRow>
              <span>上证</span>0.11%
            </IndexRow>
          </IndexItem>
          <FooterItem href="#">
            <svg width="44" height="40" viewBox="0 0 44 40" {...stroke} strokeWidth="2">
              <path d="M11.500 4.800 A18.500 18.500 0 0 1 39.500 26 L38.500 28 L43 26" />
              <path d="M33 34.500 A18.500 18.500 0 0 1 4.500 13.500 L5.500 11 L1 13" />
              <path d="M15.500 11.500 L22 18.500 L28.500 11.500 M22 18.500 V29.500 M15 18.500 H29 M15 24 H29" />
            </svg>
            交易
          </FooterItem>
          <FooterItem href="#">
            <svg width="38" height="40" viewBox="0 0 38 40" {...stroke}>
              <path d="M26 3 H6 Q2 3 2 7 V33 Q2 37 6 37 H31 Q35.500 37 35.500 33 V13" />
              <path d="M35 3.500 L33.500 5.500" strokeWidth="4.500" strokeLinecap="round" />
              <path d="M30.500 9 L17 23" strokeWidth="4.500" />
              <path d="M13 27 L15 21.500 L18.500 24.800z" fill="#666" strokeWidth="0.500" />
            </svg>
            发帖
          </FooterItem>
          <FooterItem href="#">
            <svg width="36" height="40" viewBox="0 0 36 40" {...stroke}>
              <rect x="2" y="4" width="13.500" height="14" rx="2.500" />
              <rect x="2" y="22.500" width="13.500" height="14" rx="2.500" />
              <rect x="20" y="22.500" width="14" height="14" rx="2.500" />
              <path d="M26 3.500 Q27 2.500 28 3.500 L34.500 10 Q35.500 11 34.500 12 L28 18.500 Q27 19.500 26 18.500 L19.500 12 Q18.500 11 19.500 10z" />
            </svg>
            功能
          </FooterItem>
          <FooterItem href="#">
            <svg width="40" height="40" viewBox="0 0 40 40" {...stroke}>
              <circle cx="20" cy="20" r="17.500" />
              <g fill="#666" stroke="none">
                <circle cx="12.500" cy="20" r="2" />
                <circle cx="20" cy="20" r="2" />
                <circle cx="27.500" cy="20" r="2" />
              </g>
            </svg>
            设自选
          </FooterItem>
        </FooterNav>
        <HomeBar />
      </Footer>
    </Page>
  );
}
